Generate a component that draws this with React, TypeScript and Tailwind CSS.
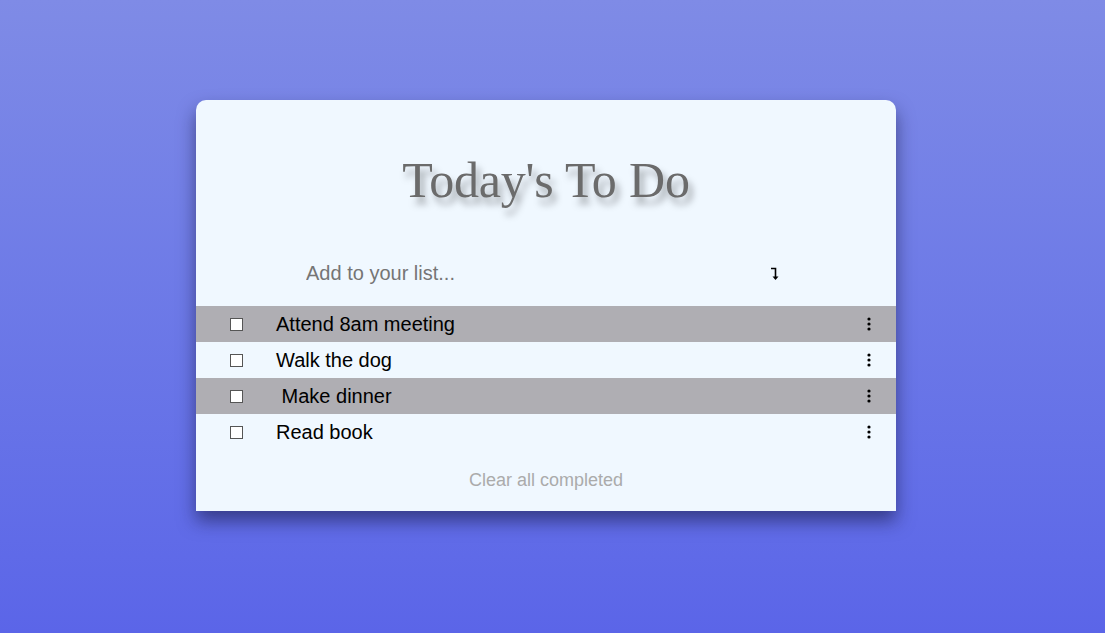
import React from "react";

const items = [
  { text: "Attend 8am meeting", gray: true },
  { text: "Walk the dog", gray: false },
  { text: "\u00a0Make dinner", gray: true },
  { text: "Read book", gray: false },
];

function Kebab() {
  return (
    <svg width="4" height="14" viewBox="0 0 4 14" className="block">
      <circle cx="2" cy="2" r="1.6" fill="#000" />
      <circle cx="2" cy="7" r="1.6" fill="#000" />
      <circle cx="2" cy="12" r="1.6" fill="#000" />
    </svg>
  );
}

function CornerArrow() {
  return (
    <svg width="10" height="14" viewBox="0 0 10 14" className="block">
      <path d="M1 1.5 H5.5 V11" fill="none" stroke="#000" strokeWidth="1.6" />
      <path d="M2.5 9.5 L5.5 13 L8.5 9.5 Z" fill="#000" />
    </svg>
  );
}

export default function App() {
  return (
    <div className="min-h-screen w-full bg-gradient-to-b from-[#7f8be6] to-[#5b65e8] flex justify-center pr-[13px] pt-[100px]">
      <div className="w-[700px] h-[411px] bg-[#f0f8ff] rounded-t-[10px] shadow-[0_10px_18px_rgba(20,20,60,0.55)] flex flex-col">
        <div className="h-[150px] flex items-end justify-center pb-[45px]">
          <h1
            className="text-[50px] leading-none text-[#6b6b6b] tracking-[-0.2px] [text-shadow:4px_7px_7px_rgba(0,0,0,0.35)]"
            style={{ fontFamily: '"Liberation Serif", "Times New Roman", serif' }}
          >
            Today's To Do
          </h1>
        </div>
        <div className="h-[56px] flex items-start pt-[10px] pl-[110px] pr-[116px]" style={{ fontFamily: '"Liberation Sans", Arial, sans-serif' }}>
          <input
            className="flex-1 bg-transparent outline-none text-[20px] leading-[26px] text-black placeholder:text-[#757575]"
            placeholder="Add to your list..."
          />
          <div className="pt-[7px]">
            <CornerArrow />
          </div>
        </div>
        <div style={{ fontFamily: '"Liberation Sans", Arial, sans-serif' }}>
          {items.map((it, i) => (
            <div
              key={i}
              className={`h-[36px] flex items-center ${it.gray ? "bg-[#afaeb3]" : ""}`}
            >
              <div className="w-[80px] flex justify-start pl-[34px]">
                <span className="block w-[13px] h-[13px] border border-[#555] bg-white" />
              </div>
              <span className="flex-1 text-[20px] text-black whitespace-pre">{it.text}</span>
              <div className="pr-[25px]">
                <Kebab />
              </div>
            </div>
          ))}
        </div>
        <div className="flex-1 flex items-center justify-center pb-[1px]" style={{ fontFamily: '"Liberation Sans", Arial, sans-serif' }}>
          <span className="text-[18px] text-[#ababab]">Clear all completed</span>
        </div>
      </div>
    </div>
  );
}
